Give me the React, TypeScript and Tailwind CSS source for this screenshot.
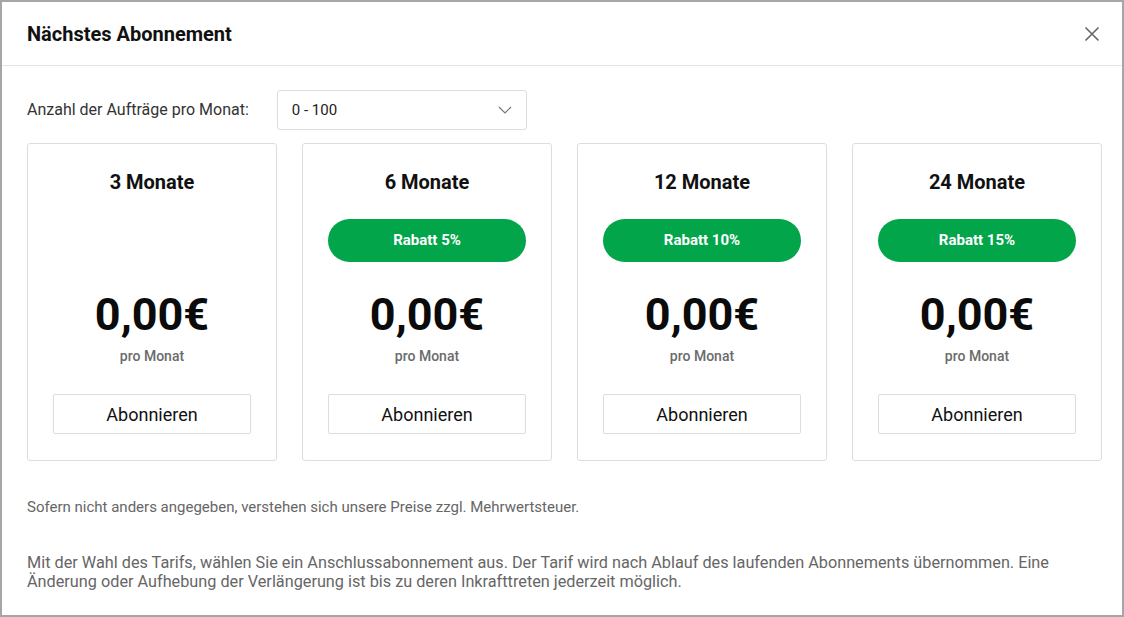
import React from 'react';

const plans = [
	{ months: '3 Monate', discount: null },
	{ months: '6 Monate', discount: 'Rabatt 5%' },
	{ months: '12 Monate', discount: 'Rabatt 10%' },
	{ months: '24 Monate', discount: 'Rabatt 15%' },
];

function PlanCard({ months, discount }: { months: string; discount: string | null }) {
	return (
		<div className="flex w-[250px] shrink-0 flex-col items-center rounded-[3px] border border-[#d9dee3] px-[25px] pt-[25px] pb-[26px]">
			<div className="h-[26px] text-[20px] leading-[26px] font-bold text-[#111]">{months}</div>
			<div className="mt-[24px] h-[43px] w-full">
				{discount && (
					<div className="flex h-[43px] w-full items-center justify-center rounded-full bg-[#02a54a] text-[15px] font-bold text-white">
						{discount}
					</div>
				)}
			</div>
			<div className="mt-[27px] text-[45px] leading-[52px] font-bold text-[#0b0b0b]">0,00€</div>
			<div className="mt-[5px] text-[14px] leading-5 font-medium text-[#6b6b6b]">pro Monat</div>
			<button className="mt-[28px] h-10 w-full rounded-[2px] border border-[#d9dee3] bg-white text-[18px] text-[#111]">
				Abonnieren
			</button>
		</div>
	);
}

export default function App() {
	return (
		<div
			className="h-[617px] w-[1124px] border-2 border-[#a6a6a6] bg-white"
			style={{ fontFamily: 'Roboto, "Liberation Sans", sans-serif' }}
		>
			{/* Header */}
			<div className="flex h-[64px] items-center justify-between border-b border-[#e4e4e4] pr-[22px] pl-[25px]">
				<h1 className="text-[20px] font-bold text-[#111]">Nächstes Abonnement</h1>
				<button className="text-[#666]" aria-label="Schließen">
					<svg width="16" height="16" viewBox="0 0 16 16" fill="none" stroke="currentColor" strokeWidth="1.6">
						<path d="M1.5 1.5 14.5 14.5M14.5 1.5 1.5 14.5" />
					</svg>
				</button>
			</div>

			<div className="px-[25px]">
				{/* Orders per month */}
				<div className="mt-[24px] flex items-center gap-[28px]">
					<span className="text-[16px] text-[#333]">Anzahl der Aufträge pro Monat:</span>
					<div className="flex h-10 w-[250px] items-center justify-between rounded-[3px] border border-[#d9dee3] pr-[14px] pl-[14px]">
						<span className="text-[15px] text-[#222]">0 - 100</span>
						<svg width="14" height="8" viewBox="0 0 14 8" fill="none" stroke="#777" strokeWidth="1.2">
							<path d="M1 1l6 6 6-6" />
						</svg>
					</div>
				</div>

				{/* Plans */}
				<div className="mt-[13px] flex gap-[25px]">
					{plans.map((p) => (
						<PlanCard key={p.months} months={p.months} discount={p.discount} />
					))}
				</div>

				{/* Notes */}
				<p className="mt-9 text-[15px] leading-5 text-[#666]">
					Sofern nicht anders angegeben, verstehen sich unsere Preise zzgl. Mehrwertsteuer.
				</p>
				<p className="mt-[36px] pr-2 text-[16.25px] leading-[19px] text-[#666]">
					Mit der Wahl des Tarifs, wählen Sie ein Anschlussabonnement aus. Der Tarif wird nach Ablauf des laufenden
					Abonnements übernommen. Eine Änderung oder Aufhebung der Verlängerung ist bis zu deren Inkrafttreten jederzeit
					möglich.
				</p>
			</div>
		</div>
	);
}
